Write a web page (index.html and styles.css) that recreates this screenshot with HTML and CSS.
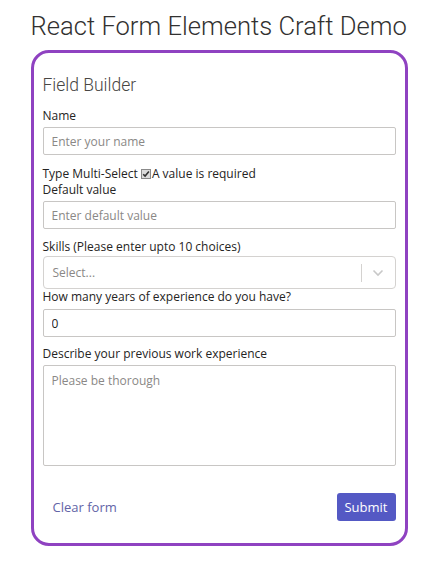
FILE: index.html
```html
<!DOCTYPE html>
<html lang="en">
<head>
<meta charset="utf-8">
<title>React Form Elements Craft Demo</title>
<link rel="stylesheet" href="styles.css">
</head>
<body>
<div class="page">
  <h1 class="title">React Form Elements Craft Demo</h1>
  <form class="card">
    <h2 class="card-title">Field Builder</h2>

    <div class="field field-first">
      <label class="label">Name</label>
      <input class="input" type="text" placeholder="Enter your name">
    </div>

    <div class="field field-inline">
      <div class="label">Type Multi-Select <span class="check"><svg width="10" height="10" viewBox="0 0 10 10"><rect x="0.5" y="0.5" width="9" height="9" fill="#dcdcdc" stroke="#8a8a8a"/><path d="M2.2 5.2 L4.1 7.1 L7.9 2.6" fill="none" stroke="#333" stroke-width="1.6"/></svg></span>A value is required</div>
      <label class="label">Default value</label>
      <input class="input" type="text" placeholder="Enter default value">
    </div>

    <div class="field field-tight">
      <label class="label label-tight">Skills (Please enter upto 10 choices)</label>
      <div class="select">
        <span class="select-placeholder">Select...</span>
        <span class="select-sep"></span>
        <span class="select-arrow"><svg width="12" height="8" viewBox="0 0 12 8"><path d="M1.5 1.5 L6 6 L10.5 1.5" fill="none" stroke="#c8c8c8" stroke-width="1.6"/></svg></span>
      </div>
    </div>

    <div class="field field-years">
      <label class="label label-years">How many years of experience do you have?</label>
      <input class="input" type="text" value="0">
    </div>

    <div class="field">
      <label class="label">Describe your previous work experience</label>
      <textarea class="textarea" placeholder="Please be thorough"></textarea>
    </div>

    <div class="actions">
      <button type="button" class="link-btn">Clear form</button>
      <button type="button" class="primary-btn">Submit</button>
    </div>
  </form>
</div>
</body>
</html>
```

FILE: styles.css
```css
* { box-sizing: border-box; }
body {
  margin: 0;
  background: #ffffff;
  font-family: "Open Sans", "Noto Sans", sans-serif;
  color: #252423;
}
.page {
  width: 377px;
  margin: 0 auto;
  padding-top: 8px;
}
.title {
  margin: 0 0 6px 0;
  font-family: Roboto, "Open Sans", sans-serif;
  font-size: 25.6px;
  line-height: 36px;
  font-weight: 300;
  color: #323130;
  letter-spacing: 0;
  white-space: nowrap;
}
.card {
  border: 3px solid #8f42c1;
  border-radius: 18px;
  padding: 20px 9px 22px 9px;
}
.card-title {
  margin: 0 0 11px 0;
  font-family: Roboto, "Open Sans", sans-serif;
  font-size: 17.5px;
  line-height: 24px;
  font-weight: 300;
  color: #484644;
}
.field {
  margin-bottom: 10px;
}
.field-first { margin-bottom: 11px; }
.field-tight { margin-bottom: 0; }
.field-years { margin-bottom: 9px; }
.label {
  display: block;
  font-size: 12px;
  line-height: 16px;
  color: #252423;
  margin-bottom: 3px;
}
.label-tight { margin-bottom: 1px; }
.label-years { margin-bottom: 4px; }
.field-inline .label:first-child { margin-bottom: 0; }
.check {
  display: inline-block;
  vertical-align: -1px;
  margin-right: 1px;
  line-height: 0;
}
.input, .textarea {
  display: block;
  width: 100%;
  height: 28px;
  border: 1px solid #c8c6c4;
  border-radius: 2px;
  padding: 0 8px;
  font-family: inherit;
  font-size: 12px;
  color: #252423;
  background: #fff;
  outline: none;
}
.input::placeholder, .textarea::placeholder { color: #8a8886; }
.textarea {
  height: 101px;
  padding: 6px 8px;
  resize: none;
}
.select {
  display: flex;
  align-items: center;
  height: 33px;
  border: 1px solid #d4d2d0;
  border-radius: 4px;
  padding-left: 9px;
}
.select-placeholder {
  flex: 1;
  font-size: 12px;
  color: #8a8886;
}
.select-sep {
  width: 1px;
  height: 18px;
  background: #d4d2d0;
}
.select-arrow {
  width: 33px;
  display: flex;
  justify-content: center;
  align-items: center;
}
.actions {
  display: flex;
  justify-content: space-between;
  align-items: center;
  margin-top: 27px;
}
.link-btn {
  border: 0;
  background: none;
  padding: 0 10px;
  font-family: inherit;
  font-size: 13px;
  color: #6264a7;
  height: 28px;
}
.primary-btn {
  border: 0;
  border-radius: 3px;
  background: #5459c4;
  color: #fff;
  font-family: inherit;
  font-size: 13px;
  height: 28px;
  width: 59px;
  padding: 0;
}
```
